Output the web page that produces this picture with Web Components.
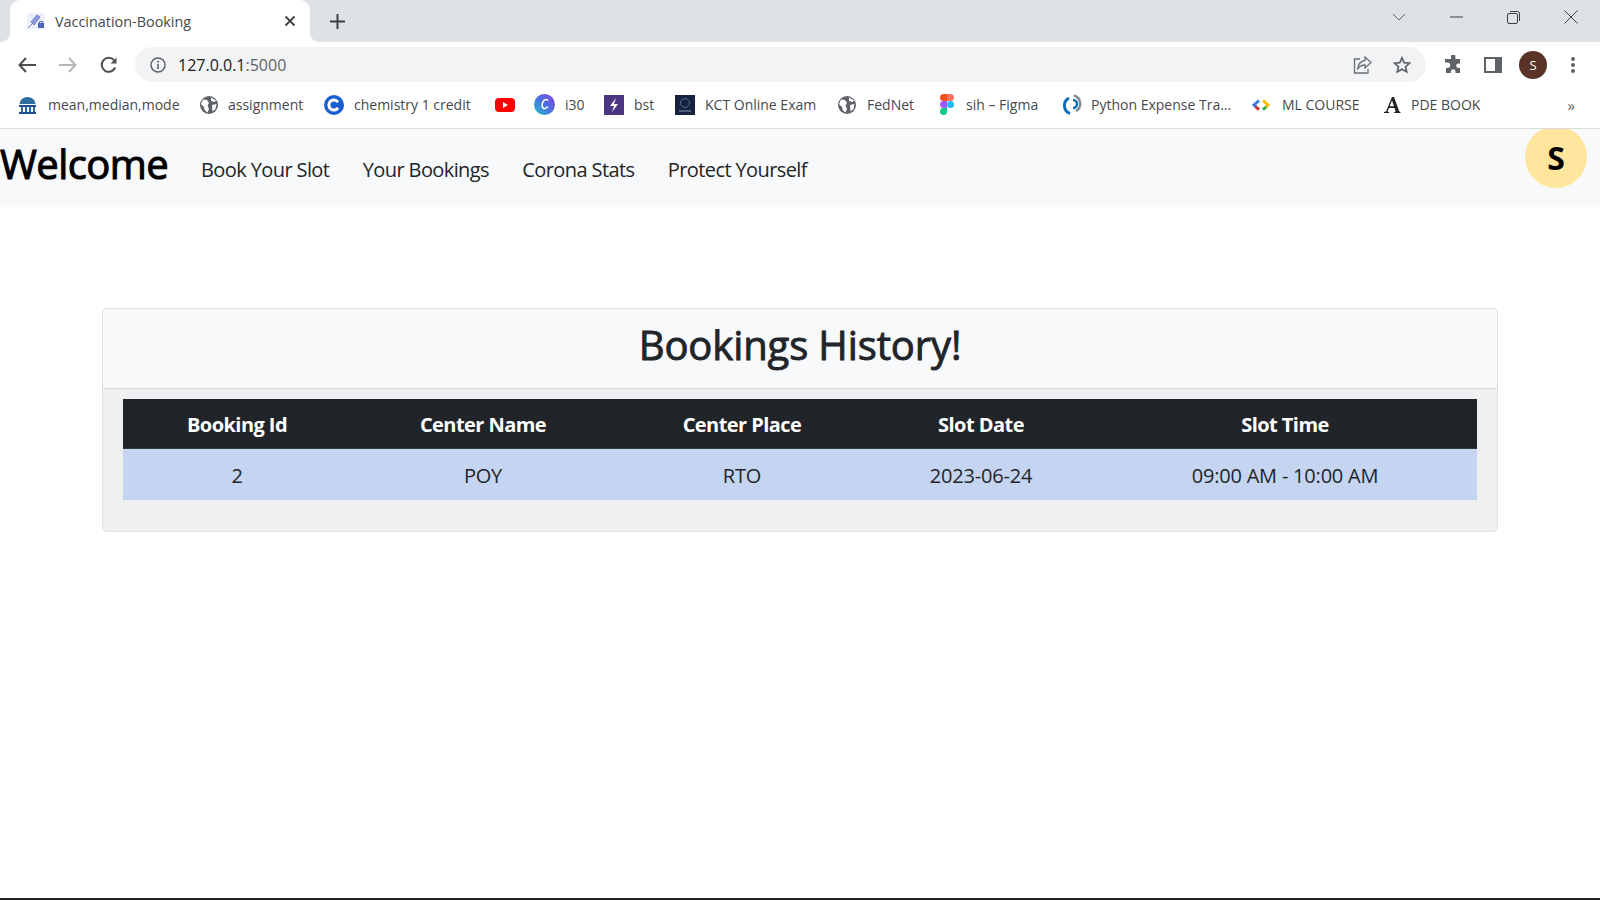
<!DOCTYPE html>
<html lang="en">
  <head>
    <meta charset="UTF-8" />
    <title>Vaccination-Booking</title>
    <style>
      html,
      body {
        margin: 0;
        height: 100%;
      }
      body {
        height: 900px;
        overflow: hidden;
        display: flex;
        flex-direction: column;
        background: #fff;
        font-family: 'Open Sans', 'Noto Sans', sans-serif;
        color: #212529;
      }
      page-body {
        flex: 1;
      }
    </style>
  </head>
  <body>
    <tab-strip title-text="Vaccination-Booking"></tab-strip>
    <browser-toolbar url="127.0.0.1" port=":5000"></browser-toolbar>
    <bookmark-bar>
      <bookmark-item w="131" gap="11">
        <svg slot="icon" width="19" height="18" viewBox="0 0 19 18"><path d="M9.500 1a8 7 0 0 1 8 7H1.500a8 7 0 0 1 8-7z" fill="#2f6f9f"/><path d="M1 9h17v2H1zM1 16h17v2H1z" fill="#1f4f8f"/><path d="M3 11h2v5H3zM7 11h2v5H7zM11 11h2v5h-2zM15 11h2v5h-2z" fill="#2a67a8"/></svg>
        mean,median,mode
      </bookmark-item>
      <bookmark-item w="75" gap="10"><globe-icon slot="icon"></globe-icon>assignment</bookmark-item>
      <bookmark-item w="120" gap="10">
        <svg slot="icon" width="20" height="20" viewBox="0 0 20 20"><circle cx="10" cy="10" r="10" fill="#1a5fd0"/><path d="M14 7.200a5 5 0 1 0 0 5.600" fill="none" stroke="#fff" stroke-width="3"/></svg>
        chemistry 1 credit
      </bookmark-item>
      <bookmark-item w="0" gap="0" style="margin-right: -2px">
        <svg slot="icon" width="20" height="14" viewBox="0 0 20 14"><rect width="20" height="14" rx="4" fill="#f00"/><path d="M8 4l5 3-5 3z" fill="#fff"/></svg>
      </bookmark-item>
      <bookmark-item w="18" gap="10">
        <svg slot="icon" width="21" height="21" viewBox="0 0 21 21"><defs><linearGradient id="cv" x1="0" y1="1" x2="1" y2="0"><stop offset="0" stop-color="#1fc8c8"/><stop offset=".5" stop-color="#4a6fe0"/><stop offset="1" stop-color="#8a3fe0"/></linearGradient></defs><circle cx="10.500" cy="10.500" r="10.500" fill="url(#cv)"/><path d="M14 6.500c-1-1.500-3-1.500-4.500.5s-2 5.500-.5 7 3.500 0 5-1.500" fill="none" stroke="#fff" stroke-width="1.600"/></svg>
        i30
      </bookmark-item>
      <bookmark-item w="20" gap="10">
        <svg slot="icon" width="20" height="20" viewBox="0 0 20 20"><rect width="20" height="20" fill="#4b3480"/><path d="M12 3l-6 8h4l-2 6 6-8h-4z" fill="#fff"/></svg>
        bst
      </bookmark-item>
      <bookmark-item w="112" gap="10">
        <svg slot="icon" width="20" height="20" viewBox="0 0 20 20"><rect width="20" height="20" fill="#15233f"/><circle cx="10" cy="8" r="4.500" fill="none" stroke="#56688a"/><path d="M4 16h12" stroke="#8a98b0"/></svg>
        KCT Online Exam
      </bookmark-item>
      <bookmark-item w="52" gap="11"><globe-icon slot="icon"></globe-icon>FedNet</bookmark-item>
      <bookmark-item w="75" gap="12">
        <svg slot="icon" width="14" height="21" viewBox="0 0 14 21"><path d="M3.500 0H7v7H3.500a3.500 3.500 0 0 1 0-7z" fill="#f24e1e"/><path d="M7 0h3.500a3.500 3.500 0 0 1 0 7H7z" fill="#ff7262"/><path d="M3.500 7H7v7H3.500a3.500 3.500 0 0 1 0-7z" fill="#a259ff"/><circle cx="10.500" cy="10.500" r="3.500" fill="#1abcfe"/><path d="M3.500 14H7v3.500A3.500 3.500 0 1 1 3.500 14z" fill="#0acf83"/></svg>
        sih – Figma
      </bookmark-item>
      <bookmark-item w="139" gap="9">
        <svg slot="icon" width="20" height="21" viewBox="0 0 20 21"><path d="M12 1.500a8.500 8.500 0 0 1 2 15.500" fill="none" stroke="#7d8a96" stroke-width="2.500"/><path d="M7 4a8.500 8.500 0 0 0 1 15.500" fill="none" stroke="#0b6fb8" stroke-width="3"/><path d="M11 6a4 4 0 0 1 0 8" fill="none" stroke="#0b6fb8" stroke-width="2.500"/></svg>
        Python Expense Tra...
      </bookmark-item>
      <bookmark-item w="80" gap="11">
        <svg slot="icon" width="20" height="12" viewBox="0 0 20 12"><path d="M8 1.500L3 6l2.500 2.300" fill="none" stroke="#3a7be0" stroke-width="3"/><path d="M5 8l3 2.700" stroke="#d93025" stroke-width="3"/><path d="M12 1.500L17 6l-2.500 2.300" fill="none" stroke="#fbbc04" stroke-width="3"/><path d="M15 8l-3 2.700" stroke="#34a853" stroke-width="3"/></svg>
        ML COURSE
      </bookmark-item>
      <bookmark-item w="71" gap="10">
        <svg slot="icon" width="18" height="18" viewBox="0 0 18 18"><path d="M1 17h5v-1l-1.500-.4L6 12h5.500l1.200 3.600-1.500.4v1H17.500v-1l-1.200-.4L11 1H9L3 15.600 1 16zM6.700 10.300L9 4.500l2 5.800z" fill="#222"/></svg>
        PDE BOOK
      </bookmark-item>
    </bookmark-bar>
    <site-navbar brand="Welcome" avatar="S">
      <nav-link>Book Your Slot</nav-link>
      <nav-link>Your Bookings</nav-link>
      <nav-link>Corona Stats</nav-link>
      <nav-link>Protect Yourself</nav-link>
    </site-navbar>
    <page-body>
      <booking-card heading="Bookings History!">
        <booking-table></booking-table>
      </booking-card>
    </page-body>
    <bottom-edge></bottom-edge>

    <script>
      const FONT = `'Open Sans', 'Noto Sans', sans-serif`

      class TabStrip extends HTMLElement {
        connectedCallback() {
          const root = this.attachShadow({ mode: 'open' })
          root.innerHTML = `
            <style>
              :host { display: flex; align-items: stretch; height: 42px; background: #dee1e6; font-family: ${FONT}; }
              .tab { position: relative; margin-left: 10px; width: 300px; box-sizing: border-box; padding: 0 14px 0 17px; background: #fff;
                border-radius: 10px 10px 0 0; display: flex; align-items: center; gap: 10px; }
              .tab::before, .tab::after { content: ''; position: absolute; bottom: 0; width: 10px; height: 10px; }
              .tab::before { left: -10px; background: radial-gradient(circle at 0 0, transparent 10px, #fff 10.500px); }
              .tab::after { right: -10px; background: radial-gradient(circle at 100% 0, transparent 10px, #fff 10.500px); }
              .name { flex: 1; font-size: 14.400px; color: #45494d; white-space: nowrap; }
              .new { margin-left: 20px; align-self: center; }
              .spacer { flex: 1; }
              .win { display: flex; align-items: center; gap: 44px; padding: 0 22px 8px 0; }
              svg { display: block; flex: none; }
            </style>
            <div class="tab">
              <svg width="18" height="16" viewBox="0 0 18 16"><rect width="18" height="16" rx="3" fill="#eceefa"/><path d="M1 15l4-4M4 9l6-7 3 2-6 8z" fill="#8f9bdc" stroke="#6f7fc8"/><path d="M11 10h6v5h-6z" fill="#4d67b8"/><path d="M12.500 10V8.500h3V10" fill="none" stroke="#4d67b8"/></svg>
              <span class="name">${this.getAttribute('title-text')}</span>
              <svg width="12" height="12" viewBox="0 0 12 12"><path d="M1.500 1.500l9 9M10.500 1.500l-9 9" stroke="#3c4043" stroke-width="1.800"/></svg>
            </div>
            <svg class="new" width="15" height="15" viewBox="0 0 15 15"><path d="M7.500 0v15M0 7.500h15" stroke="#3c4043" stroke-width="2"/></svg>
            <div class="spacer"></div>
            <div class="win">
              <svg width="14" height="8" viewBox="0 0 14 8"><path d="M1 1l6 6 6-6" fill="none" stroke="#5f6368"/></svg>
              <svg width="13" height="2" viewBox="0 0 13 2"><path d="M0 1h13" stroke="#3c4043"/></svg>
              <svg width="13" height="13" viewBox="0 0 13 13"><rect x=".5" y="2.500" width="10" height="10" rx="1.500" fill="none" stroke="#3c4043"/><path d="M3 .5h7.500a2 2 0 0 1 2 2V10" fill="none" stroke="#3c4043"/></svg>
              <svg width="14" height="14" viewBox="0 0 14 14"><path d="M.5.500l13 13M13.500.500l-13 13" stroke="#3c4043"/></svg>
            </div>`
        }
      }

      class BrowserToolbar extends HTMLElement {
        connectedCallback() {
          const root = this.attachShadow({ mode: 'open' })
          root.innerHTML = `
            <style>
              :host { display: flex; align-items: center; height: 43px; padding: 2px 20px 0 18px; box-sizing: border-box; background: #fff; font-family: ${FONT}; }
              svg { display: block; flex: none; }
              .nav { display: flex; align-items: center; gap: 23px; }
              .omni { flex: 1; height: 35px; margin: 0 18px 0 17px; border-radius: 18px; background: #f1f3f4; display: flex; align-items: center; padding: 0 15px 0 15px; gap: 12px; }
              .url { flex: 1; font-size: 16px; color: #202124; }
              .url span { color: #5f6368; }
              .end { display: flex; align-items: center; gap: 21px; }
              .tools { display: flex; align-items: center; gap: 21px; }
              .avatar { margin: 0 -2px 0 -4px; width: 28px; height: 28px; border-radius: 50%; background: #5a3327; color: #fff; display: flex; align-items: center; justify-content: center; font-size: 13px; }
            </style>
            <div class="nav">
              <svg width="18" height="16" viewBox="0 0 18 16"><path d="M8 1L1.500 8 8 15M2 8h16" fill="none" stroke="#4b4f54" stroke-width="2"/></svg>
              <svg width="18" height="16" viewBox="0 0 18 16"><path d="M10 1l6.500 7L10 15M16 8H0" fill="none" stroke="#b3b6ba" stroke-width="2"/></svg>
              <svg width="18" height="18" viewBox="0 0 18 18"><path d="M15.200 11.500A7 7 0 1 1 14 4.200" fill="none" stroke="#4b4f54" stroke-width="2"/><path d="M16.500 1.500v6h-6z" fill="#4b4f54"/></svg>
            </div>
            <div class="omni">
              <svg width="16" height="16" viewBox="0 0 16 16"><circle cx="8" cy="8" r="7" fill="none" stroke="#5f6368" stroke-width="1.500"/><path d="M8 7v5" stroke="#5f6368" stroke-width="1.600"/><circle cx="8" cy="4.700" r="1" fill="#5f6368"/></svg>
              <div class="url">${this.getAttribute('url')}<span>${this.getAttribute('port')}</span></div>
              <div class="end">
                <svg width="19" height="18" viewBox="0 0 19 18"><path d="M7 3H1.500v14H15v-4" fill="none" stroke="#6b6f74" stroke-width="1.300"/><path d="M12 1l6 5.500-6 5.500V9C8 9 6 10.500 4.500 13.500 5 8.500 7.500 5 12 4.500z" fill="none" stroke="#6b6f74" stroke-width="1.300"/></svg>
                <svg width="18" height="18" viewBox="0 0 18 18"><path d="M9 1.800l2.200 4.900 5.300.5-4 3.500 1.200 5.200L9 13.200l-4.700 2.700 1.200-5.200-4-3.500 5.300-.5z" fill="none" stroke="#5f6368" stroke-width="1.700"/></svg>
              </div>
            </div>
            <div class="tools">
              <svg width="19" height="19" viewBox="0 0 19 19"><path d="M7 1.500a2.200 2.200 0 0 1 4.400 0V4H16v4.500h-1.500a2.300 2.300 0 0 0 0 4.600H16V18H11.500v-1.500a2.300 2.300 0 0 0-4.600 0V18H2v-5h1.500a2.700 2.700 0 0 0 0-5.400H1V4h6z" fill="#5f6368"/></svg>
              <svg width="18" height="16" viewBox="0 0 18 16"><path fill-rule="evenodd" d="M0 0h18v16H0zM2 2v12h9V2z" fill="#5f6368"/></svg>
              <div class="avatar">S</div>
              <svg width="14" height="18" viewBox="0 0 14 18"><g fill="#5f6368"><circle cx="7" cy="3" r="2"/><circle cx="7" cy="9" r="2"/><circle cx="7" cy="15" r="2"/></g></svg>
            </div>`
        }
      }

      class GlobeIcon extends HTMLElement {
        connectedCallback() {
          const root = this.attachShadow({ mode: 'open' })
          root.innerHTML = `
            <style>:host { display: block; width: 18px; height: 18px; } svg { display: block; }</style>
            <svg width="18" height="18" viewBox="0 0 18 18"><circle cx="9" cy="9" r="9" fill="#5f6368"/><path d="M3 3.500l4 .5 2 3-1.500 2.500L9 13l-1.500 3.500C5 15 4 13 4 11L1 8zM11 1.500l5 3-1.500 1.500L11 5zM12 9l4.500-1-1 5-3 2.500z" fill="#fff"/></svg>`
        }
      }

      class BookmarkItem extends HTMLElement {
        connectedCallback() {
          const w = this.getAttribute('w')
          const root = this.attachShadow({ mode: 'open' })
          root.innerHTML = `
            <style>
              :host { display: flex; align-items: center; gap: ${this.getAttribute('gap')}px; }
              .label { width: ${w}px; font-size: 14px; color: #45494d; white-space: nowrap; display: ${w === '0' ? 'none' : 'block'}; }
              .icon { display: flex; align-items: center; }
            </style>
            <span class="icon"><slot name="icon"></slot></span>
            <span class="label"><slot></slot></span>`
        }
      }

      class BookmarkBar extends HTMLElement {
        connectedCallback() {
          const root = this.attachShadow({ mode: 'open' })
          root.innerHTML = `
            <style>
              :host { display: flex; align-items: center; height: 44px; padding: 0 25px 4px 18px; box-sizing: border-box; gap: 21px; background: #fff; border-bottom: 1px solid #dcdcdc; font-family: ${FONT}; }
              .more { margin-left: auto; font-size: 15px; color: #5f6368; }
            </style>
            <slot></slot>
            <span class="more">»</span>`
        }
      }

      class NavLink extends HTMLElement {
        connectedCallback() {
          const root = this.attachShadow({ mode: 'open' })
          root.innerHTML = `
            <style>:host { display: block; padding: 0 16px; font-size: 20px; color: #212529; white-space: nowrap; letter-spacing: -.6px; }</style>
            <slot></slot>`
        }
      }

      class SiteNavbar extends HTMLElement {
        connectedCallback() {
          const root = this.attachShadow({ mode: 'open' })
          root.innerHTML = `
            <style>
              :host { display: flex; align-items: flex-start; height: 78px; box-sizing: border-box; background: #f8f9fa; font-family: ${FONT}; overflow: hidden; }
              .brand { font-size: 40px; line-height: 54px; margin: 8px 17px 0 0; color: #000; letter-spacing: -.6px; white-space: nowrap; -webkit-text-stroke: 1px #000; }
              .links { display: flex; gap: 1.400px; margin-top: 27px; line-height: 27px; }
              .avatar { flex: none; margin: -3px 13px 0 auto; width: 62px; height: 62px; border-radius: 50%; background: #ffe69c; display: flex; align-items: center; justify-content: center; font-size: 32px; font-weight: 700; color: #000; }
            </style>
            <div class="brand">${this.getAttribute('brand')}</div>
            <div class="links"><slot></slot></div>
            <div class="avatar">${this.getAttribute('avatar')}</div>`
        }
      }

      class BookingCard extends HTMLElement {
        connectedCallback() {
          const root = this.attachShadow({ mode: 'open' })
          root.innerHTML = `
            <style>
              :host { display: block; margin: 101px 102px 0; border: 1px solid #e1e2e3; border-radius: 5px; background: #eff0f2; overflow: hidden; font-family: ${FONT}; }
              header { padding-bottom: 9px; box-sizing: border-box; height: 80px; background: #f8f9fa; border-bottom: 1px solid #d8d9da; display: flex; align-items: center; justify-content: center; }
              h1 { margin: 0; font-size: 40px; font-weight: 500; color: #212529; letter-spacing: -.12px; -webkit-text-stroke: .9px #212529; }
              .body { padding: 10px 20px 31px; }
            </style>
            <header><h1>${this.getAttribute('heading')}</h1></header>
            <div class="body"><slot></slot></div>`
        }
      }

      class BookingTable extends HTMLElement {
        connectedCallback() {
          const heads = ['Booking Id', 'Center Name', 'Center Place', 'Slot Date', 'Slot Time']
          const row = ['2', 'POY', 'RTO', '2023-06-24', '09:00 AM - 10:00 AM']
          const cells = (list, cls) => list.map((t) => `<div class="${cls}">${t}</div>`).join('')
          const root = this.attachShadow({ mode: 'open' })
          root.innerHTML = `
            <style>
              :host { display: grid; grid-template-columns: 228px 264px 254px 224px 384px; font-size: 20px; text-align: center; }
              .th, .td { display: flex; align-items: center; justify-content: center; }
              .th { height: 47px; padding-top: 2px; background: #212529; color: #fff; font-weight: 700; border-bottom: 1px solid #32383e; letter-spacing: -.55px; }
              .td { height: 50px; padding-top: 1px; background: #c5d5f1; color: #212529; letter-spacing: -.2px; }
            </style>
            ${cells(heads, 'th')}${cells(row, 'td')}`
        }
      }

      class BottomEdge extends HTMLElement {
        connectedCallback() {
          const root = this.attachShadow({ mode: 'open' })
          root.innerHTML = `<style>:host { display: block; height: 2px; background: #222; }</style>`
        }
      }

      customElements.define('tab-strip', TabStrip)
      customElements.define('browser-toolbar', BrowserToolbar)
      customElements.define('globe-icon', GlobeIcon)
      customElements.define('bookmark-item', BookmarkItem)
      customElements.define('bookmark-bar', BookmarkBar)
      customElements.define('nav-link', NavLink)
      customElements.define('site-navbar', SiteNavbar)
      customElements.define('booking-card', BookingCard)
      customElements.define('booking-table', BookingTable)
      customElements.define('bottom-edge', BottomEdge)
    </script>
  </body>
</html>
